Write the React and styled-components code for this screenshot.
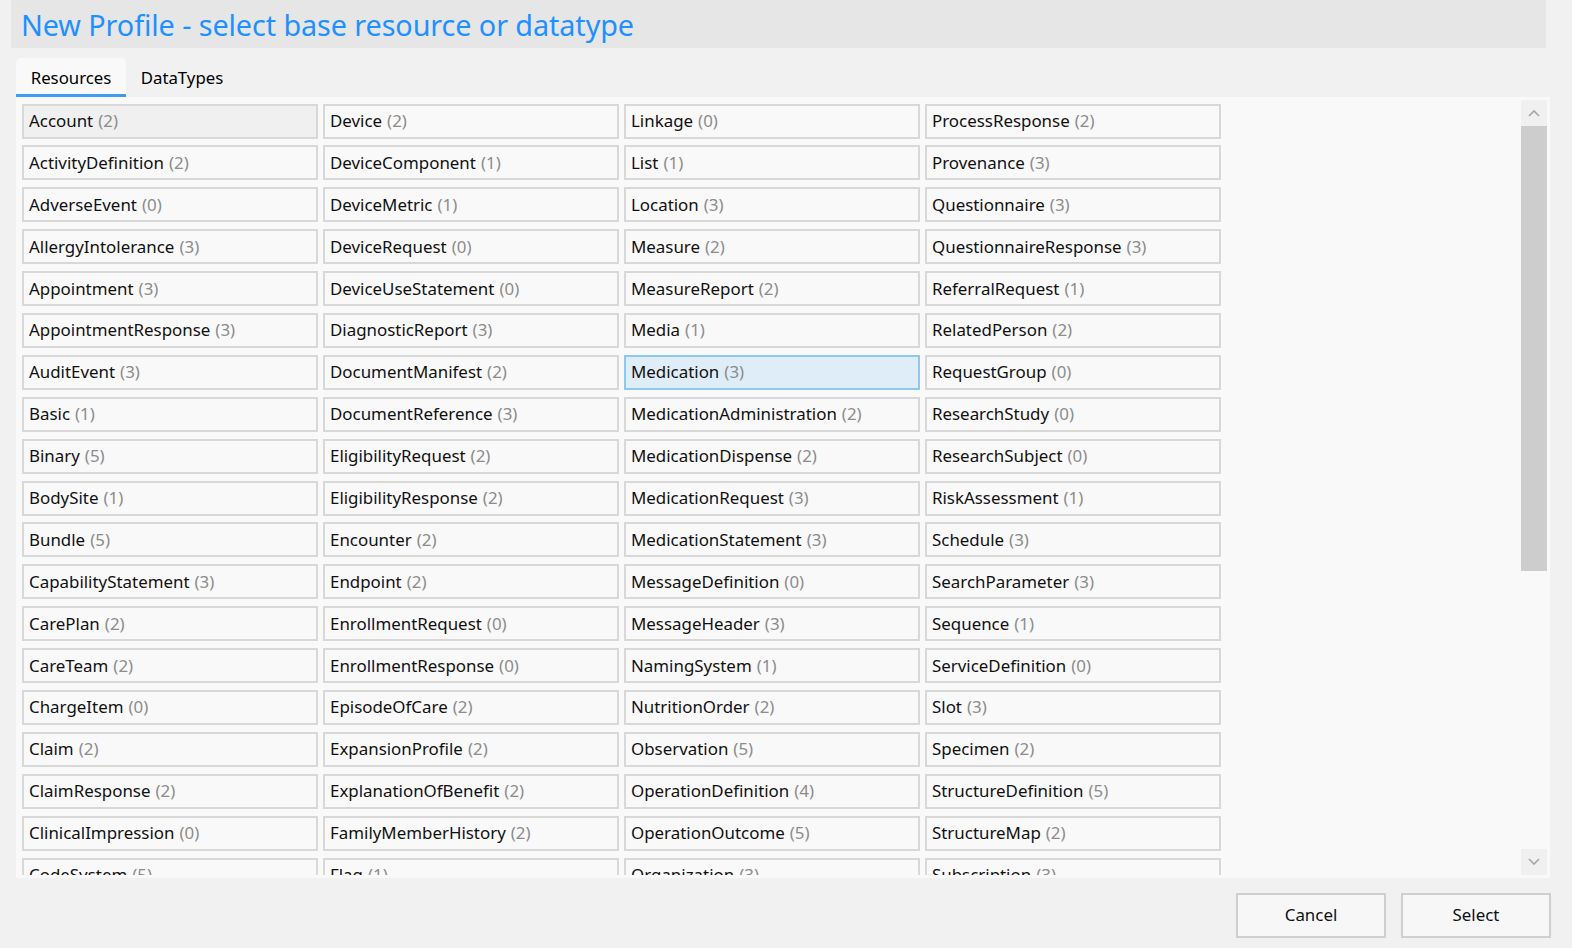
import React from "react";
import styled, { createGlobalStyle } from "styled-components";

const GlobalStyle = createGlobalStyle`
  html, body {
    margin: 0;
    padding: 0;
    background: #f1f1f1;
    font-family: "Noto Sans", "Open Sans", sans-serif;
  }
`;

const Page = styled.div`
  width: 1572px;
  height: 948px;
  box-sizing: border-box;
  padding: 0 22px 0 11px;
  display: flex;
  flex-direction: column;
  overflow: hidden;
`;

const Header = styled.header`
  height: 48px;
  margin-right: 4px;
  background: #e6e6e6;
  display: flex;
  align-items: center;
  padding-left: 10px;
`;

const Title = styled.h1`
  margin: 0;
  font-size: 28.8px;
  font-weight: 400;
  color: #1e90ff;
  letter-spacing: -0.1px;
`;

const TabBar = styled.div`
  display: flex;
  margin: 10px 0 0 5px;
  height: 39px;
`;

const Tab = styled.div`
  box-sizing: border-box;
  width: ${(p) => p.width};
  display: flex;
  align-items: center;
  justify-content: center;
  padding-top: 2px;
  font-size: 16.8px;
  color: #000;
  border-radius: 5px 5px 0 0;
  background: ${(p) => (p.active ? "#f9f9f9" : "transparent")};
  border-bottom: 3px solid ${(p) => (p.active ? "#3d9cf0" : "transparent")};
`;

const Panel = styled.div`
  margin-left: 5px;
  height: 781px;
  background: #f9f9f9;
  display: flex;
  box-sizing: border-box;
  padding: 3px 3px 3px 0;
`;

const ListArea = styled.div`
  flex: 1;
  overflow: hidden;
  padding: 3.5px 0 0 6px;
  display: flex;
  gap: 5px;
`;

const Column = styled.div`
  width: 296px;
  display: flex;
  flex-direction: column;
  gap: 6.9px;
`;

const Cell = styled.div`
  box-sizing: border-box;
  flex: none;
  height: 35px;
  display: flex;
  align-items: center;
  padding: 0 0 1px 5px;
  font-size: 16.9px;
  color: #111;
  white-space: nowrap;
  border: 2px solid ${(p) => (p.selected ? "#8cc8f0" : "#d8d8d8")};
  background: ${(p) =>
    p.selected ? "#deedf7" : p.hover ? "#f0f0f0" : "#f9f9f9"};
`;

const Count = styled.span`
  color: #8c8c8c;
  margin-left: 5px;
`;

const Scrollbar = styled.div`
  width: 26px;
  display: flex;
  flex-direction: column;
`;

const Arrow = styled.div`
  height: 26px;
  flex: none;
  background: #f0f0f0;
  display: flex;
  align-items: center;
  justify-content: center;
`;

const Track = styled.div`
  flex: 1;
  display: flex;
  flex-direction: column;
`;

const Thumb = styled.div`
  height: 445px;
  background: #cdcdcd;
`;

const Footer = styled.div`
  display: flex;
  justify-content: flex-end;
  gap: 15px;
  padding-top: 15px;
  margin-right: -1px;
`;

const Button = styled.button`
  width: 150px;
  height: 45px;
  box-sizing: border-box;
  border: 2px solid #cfcfcf;
  background: #f7f7f7;
  font-family: inherit;
  font-size: 16.9px;
  color: #111;
  padding: 0 0 2px;
`;

const columns = [
  [
    ["Account", 2], ["ActivityDefinition", 2], ["AdverseEvent", 0], ["AllergyIntolerance", 3],
    ["Appointment", 3], ["AppointmentResponse", 3], ["AuditEvent", 3], ["Basic", 1],
    ["Binary", 5], ["BodySite", 1], ["Bundle", 5], ["CapabilityStatement", 3],
    ["CarePlan", 2], ["CareTeam", 2], ["ChargeItem", 0], ["Claim", 2],
    ["ClaimResponse", 2], ["ClinicalImpression", 0], ["CodeSystem", 5], ["Communication", 2],
  ],
  [
    ["Device", 2], ["DeviceComponent", 1], ["DeviceMetric", 1], ["DeviceRequest", 0],
    ["DeviceUseStatement", 0], ["DiagnosticReport", 3], ["DocumentManifest", 2], ["DocumentReference", 3],
    ["EligibilityRequest", 2], ["EligibilityResponse", 2], ["Encounter", 2], ["Endpoint", 2],
    ["EnrollmentRequest", 0], ["EnrollmentResponse", 0], ["EpisodeOfCare", 2], ["ExpansionProfile", 2],
    ["ExplanationOfBenefit", 2], ["FamilyMemberHistory", 2], ["Flag", 1], ["Goal", 1],
  ],
  [
    ["Linkage", 0], ["List", 1], ["Location", 3], ["Measure", 2],
    ["MeasureReport", 2], ["Media", 1], ["Medication", 3], ["MedicationAdministration", 2],
    ["MedicationDispense", 2], ["MedicationRequest", 3], ["MedicationStatement", 3], ["MessageDefinition", 0],
    ["MessageHeader", 3], ["NamingSystem", 1], ["NutritionOrder", 2], ["Observation", 5],
    ["OperationDefinition", 4], ["OperationOutcome", 5], ["Organization", 3], ["Parameters", 1],
  ],
  [
    ["ProcessResponse", 2], ["Provenance", 3], ["Questionnaire", 3], ["QuestionnaireResponse", 3],
    ["ReferralRequest", 1], ["RelatedPerson", 2], ["RequestGroup", 0], ["ResearchStudy", 0],
    ["ResearchSubject", 0], ["RiskAssessment", 1], ["Schedule", 3], ["SearchParameter", 3],
    ["Sequence", 1], ["ServiceDefinition", 0], ["Slot", 3], ["Specimen", 2],
    ["StructureDefinition", 5], ["StructureMap", 2], ["Subscription", 3], ["Substance", 2],
  ],
];

const Chevron = ({ up }) => (
  <svg width="12" height="8" viewBox="0 0 12 8">
    <polyline
      points={up ? "1,7 6,2 11,7" : "1,1 6,6 11,1"}
      fill="none"
      stroke="#a6a6a6"
      strokeWidth="1.6"
    />
  </svg>
);

export default function App() {
  return (
    <Page>
      <GlobalStyle />
      <Header>
        <Title>New Profile - select base resource or datatype</Title>
      </Header>
      <TabBar>
        <Tab active width="110px">Resources</Tab>
        <Tab width="112px">DataTypes</Tab>
      </TabBar>
      <Panel>
        <ListArea>
          {columns.map((col, ci) => (
            <Column key={ci}>
              {col.map(([name, n]) => (
                <Cell
                  key={name}
                  hover={name === "Account"}
                  selected={name === "Medication"}
                >
                  {name}
                  <Count>({n})</Count>
                </Cell>
              ))}
            </Column>
          ))}
        </ListArea>
        <Scrollbar>
          <Arrow>
            <Chevron up />
          </Arrow>
          <Track>
            <Thumb />
          </Track>
          <Arrow>
            <Chevron />
          </Arrow>
        </Scrollbar>
      </Panel>
      <Footer>
        <Button>Cancel</Button>
        <Button>Select</Button>
      </Footer>
    </Page>
  );
}
